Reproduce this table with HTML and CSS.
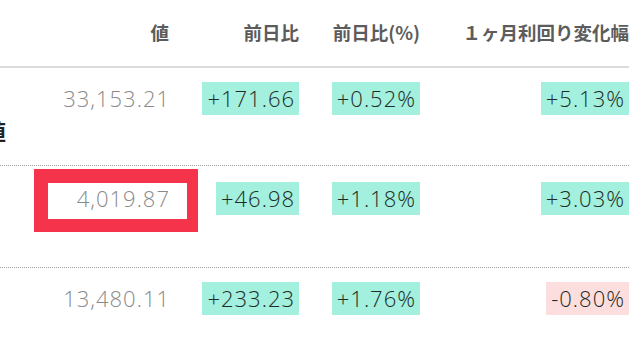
FILE: index.html
```html
<!DOCTYPE html>
<html lang="ja">
<head>
<meta charset="utf-8">
<link rel="stylesheet" href="styles.css">
</head>
<body>
<div class="table">
  <div class="row head">
    <div class="label"></div>
    <div class="cell">値</div>
    <div class="cell">前日比</div>
    <div class="cell">前日比(%)</div>
    <div class="cell">１ヶ月利回り変化幅</div>
  </div>
  <div class="row body r1">
    <div class="label"><span class="label-text">値</span></div>
    <div class="cell"><span class="value">33,153.21</span></div>
    <div class="cell"><span class="badge up">+171.66</span></div>
    <div class="cell"><span class="badge up">+0.52%</span></div>
    <div class="cell"><span class="badge up">+5.13%</span></div>
  </div>
  <div class="row body r2">
    <div class="label"></div>
    <div class="cell value-cell"><span class="value">4,019.87</span><span class="mark"></span></div>
    <div class="cell"><span class="badge up">+46.98</span></div>
    <div class="cell"><span class="badge up">+1.18%</span></div>
    <div class="cell"><span class="badge up">+3.03%</span></div>
  </div>
  <div class="row body r3">
    <div class="label"></div>
    <div class="cell"><span class="value">13,480.11</span></div>
    <div class="cell"><span class="badge up">+233.23</span></div>
    <div class="cell"><span class="badge up">+1.76%</span></div>
    <div class="cell"><span class="badge down">-0.80%</span></div>
  </div>
</div>
</body>
</html>
```
FILE: styles.css
```css
html, body {
  margin: 0;
  padding: 0;
  background: #fff;
  overflow: hidden;
}
body {
  width: 640px;
  height: 360px;
  font-family: "Open Sans", "Noto Sans CJK JP", sans-serif;
}
.table {
  padding-right: 11px;
}
.row {
  display: grid;
  grid-template-columns: 6px 163px 130px 121px 209px;
  box-sizing: border-box;
}
.cell {
  text-align: right;
}
.head {
  height: 68px;
  padding-top: 19px;
  border-bottom: 2px solid #dcdcdc;
  font-family: "Noto Sans CJK JP", sans-serif;
  font-weight: 700;
  font-size: 18.5px;
  line-height: 26px;
  color: #5c5c5c;
}
.body {
  border-bottom: 1px dotted #a0a0a0;
  padding-top: 15px;
}
.r1 { height: 98px; padding-top: 14px; }
.r2 { height: 102px; padding-top: 16px; }
.r3 { height: 110px; padding-top: 14px; border-bottom: none; }
.label {
  overflow: hidden;
  display: flex;
  justify-content: flex-end;
  align-items: flex-start;
  white-space: nowrap;
}
.label-text {
  margin-top: 32px;
  font-family: "Noto Sans CJK JP", sans-serif;
  font-weight: 700;
  font-size: 22px;
  line-height: 33px;
  color: #222;
}
.value {
  display: inline-block;
  font-size: 22px;
  font-weight: 300;
  line-height: 33px;
  color: #8a8a8a;
  letter-spacing: 1px;
  margin-right: -1px;
}
.badge {
  display: inline-block;
  font-size: 22px;
  font-weight: 300;
  line-height: 33px;
  padding: 0 4px 0 5px;
  color: #1f2b27;
  letter-spacing: 1px;
}
.up { background: #a2f0dd; }
.down { background: #fddede; }
.value-cell {
  position: relative;
}
.mark {
  position: absolute;
  left: 28px;
  top: -13px;
  width: 164px;
  height: 63px;
  box-sizing: border-box;
  border-style: solid;
  border-color: #f5334b;
  border-width: 14px 11px 13px 14px;
}
```
